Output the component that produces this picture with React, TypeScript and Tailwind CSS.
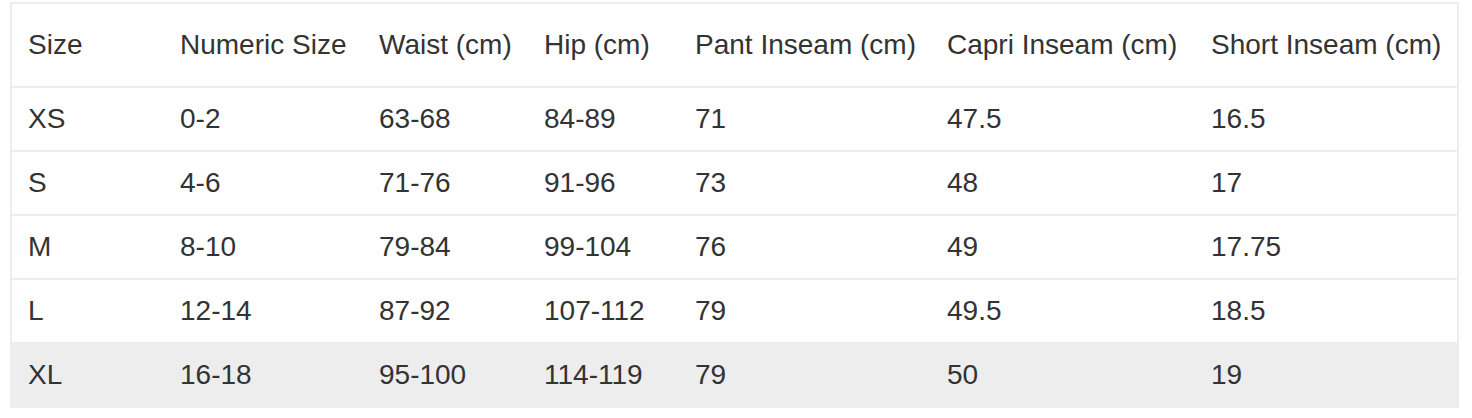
import React from "react";

const headers = ["Size", "Numeric Size", "Waist (cm)", "Hip (cm)", "Pant Inseam (cm)", "Capri Inseam (cm)", "Short Inseam (cm)"];
const rows = [
  ["XS", "0-2", "63-68", "84-89", "71", "47.5", "16.5"],
  ["S", "4-6", "71-76", "91-96", "73", "48", "17"],
  ["M", "8-10", "79-84", "99-104", "76", "49", "17.75"],
  ["L", "12-14", "87-92", "107-112", "79", "49.5", "18.5"],
  ["XL", "16-18", "95-100", "114-119", "79", "50", "19"],
];

const grid = "grid grid-cols-[152px_199px_165px_151px_252px_264px_262px]";

export default function App() {
  return (
    <div className="w-[1472px] h-[418px] bg-white pt-[2px] pl-[10px]" style={{ fontFamily: '"Liberation Sans", Arial, sans-serif' }}>
      <div className="w-[1449px] border-2 border-[#ededed] text-[28px] text-[#333] leading-none">
        <div className={`${grid} h-[84px] border-b-2 border-[#ededed] items-center`}>
          {headers.map((h) => (
            <div key={h} className="px-4 whitespace-nowrap">{h}</div>
          ))}
        </div>
        {rows.map((r, i) => (
          <div
            key={r[0]}
            className={`${grid} items-center ${i < rows.length - 1 ? "h-[64px] border-b-2 border-[#ededed]" : "h-[62px] bg-[#ededed]"}`}
          >
            {r.map((c, j) => (
              <div key={j} className="px-4 whitespace-nowrap">{c}</div>
            ))}
          </div>
        ))}
      </div>
    </div>
  );
}
